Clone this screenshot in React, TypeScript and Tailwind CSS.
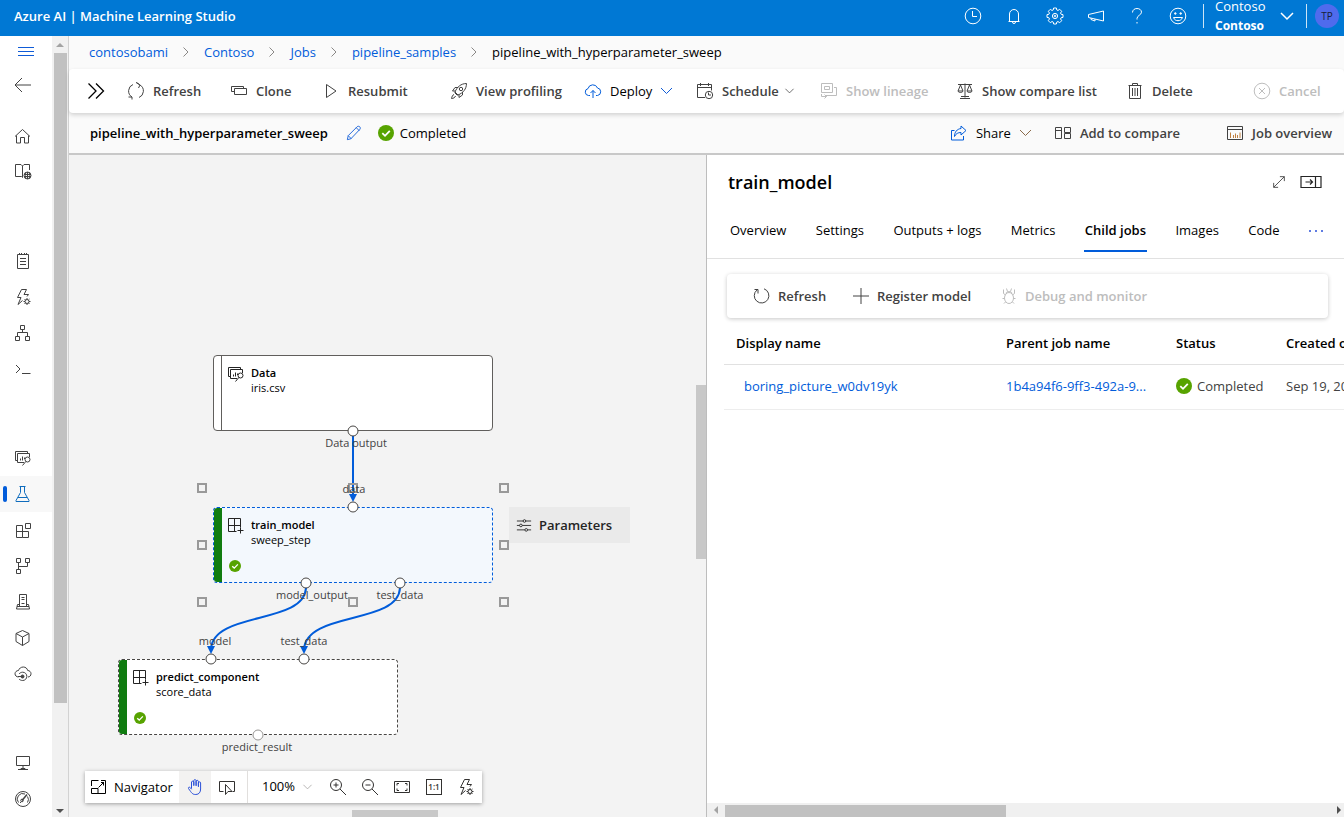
import type { ReactNode } from "react";

type IconProps = { children: ReactNode; size?: number; className?: string };

function Icon({ children, size = 18, className = "" }: IconProps) {
  return (
    <svg
      width={size}
      height={size}
      viewBox="0 0 18 18"
      fill="none"
      stroke="currentColor"
      strokeWidth={1}
      aria-hidden="true"
      className={`shrink-0 ${className}`}
    >
      {children}
    </svg>
  );
}

const gear = (
  <>
    <circle cx="13" cy="13.5" r="2" />
    <path d="M13 10v1.5M13 15.5V17M9.5 13.5H11M15 13.5h1.5M10.5 11l1.1 1.1M14.4 14.9l1.1 1.1M15.5 11l-1.1 1.1M11.6 14.9L10.5 16" />
  </>
);

const icons = {
  menu: <path d="M1 4.5h16M1 8.5h16M1 12.5h16" />,
  back: <path d="M1 9h16M8 2L1 9l7 7" />,
  home: <path d="M2.5 8.5v7.5h4v-5.5h4V16h4V8.5M1 9.5L8.5 2.5 16 9.5" />,
  book: (
    <>
      <path d="M8.5 14.5L7.5 13.5H1.5V1.5h5.5l1.5 1.5v11.5M8.5 3L10 1.5h5.5V7" />
      <circle cx="13.5" cy="12.5" r="3.5" fill="#fff" />
      <path d="M13.5 9v7M10 11.5h7M10 13.5h7M12 9.5c-1 2-1 4 0 6M15 9.5c1 2 1 4 0 6" />
    </>
  ),
  notebook: <path d="M3.5 2.500h11v14h-11zM5.5 1v2M7.5 1v2M10.5 1v2M12.5 1v2M6 6.5h6M6 9.5h6M6 12.5h6" />,
  bolt: (
    <>
      <path d="M7.5 1.5h5L10 6.5h4.5L13 8.5M7.5 1.5L3.5 9.5h3.5L4 16.5l4.5-4" />
      {gear}
    </>
  ),
  tree: <path d="M6.5 1.5h4v4h-4zM1.5 12.5h4v4h-4zM11.5 12.5h4v4h-4zM8.5 5.5v3M3.5 12.5v-4h10v4" />,
  terminal: <path d="M2 5l4 4-4 4M8 13.5h8.5" />,
  data: (
    <>
      <path d="M3.5 11.5h-2v-9h12v2M10 13.5H3.5v-9h12V8M6.5 11.5V9.5M8.5 11.5v-4M10.5 10V8.5" />
      <circle cx="13.5" cy="10.5" r="2.5" />
      <path d="M11.8 12.5L8.5 16.5" />
    </>
  ),
  flask: <path d="M5.5 1.5h6M6.5 1.5v6L2 15.5V16.5h13V15.5L10.5 7.5v-6M4 12.5h9" />,
  blocks: <path d="M2.5 4.500h6v12h-6zM2.5 10.500h12v6h-6M11.5 2.5h5v5h-5z" />,
  branch: <path d="M2.5 1.5h4v4h-4zM11.5 1.5h4v4h-4zM2.5 12.5h4v4h-4zM4.5 5.5v7M4.5 9.5h9v-4" />,
  server: <path d="M5.5 1.5h7v12h-7zM7.5 4.5h3M7.5 6.5h3M7.5 10.5h3M5 11.5H3.5l-1 4.5h13l-1-4.5H13M3 13.5h12" />,
  cube: <path d="M8.5 1.5L15 4.5v8L8.5 16.5 2 12.5v-8zM2 4.5l6.5 3.5L15 4.5M8.5 8v8.5" />,
  cloudRing: (
    <>
      <path d="M4.5 12C2.5 12 1 10.5 1 8.8S2.5 5.5 4.500 5.500C5 3.500 7 2 9.300 2s4 1.500 4.400 3.500c1.800 0 3.300 1.400 3.300 3.200S15.800 12 14 12" />
      <path d="M5 9c1-1.200 2.300-1.800 3.700-1.800A4 4 0 0 1 8.700 15.500C7.300 15.500 6 15 5 14" />
      <circle cx="8.500" cy="11.500" r="1.500" fill="currentColor" />
      <path d="M4 11.500h4" />
    </>
  ),
  monitor: <path d="M2.500 2.500h13v9h-13zM9 11.500v3M4 15.500h10M7 15.500V14.500h4v1" />,
  gauge: (
    <>
      <circle cx="9" cy="9" r="7.500" />
      <path d="M4.500 12.500A5.500 5.500 0 0 1 11 4M13.500 6.500a5.500 5.500 0 0 1 0 6M6 12.500h1" />
      <path d="M8 10.500L13 4.500" strokeWidth="1.500" />
      <circle cx="8" cy="10.500" r="1.300" />
    </>
  ),
  clock: (
    <>
      <circle cx="9" cy="9" r="7.800" />
      <path d="M8.500 4v5.500H13" />
    </>
  ),
  bell: <path d="M3.500 14.500h11M4.500 14V7a4.500 4.500 0 0 1 9 0v7M7.500 15a1.500 1.500 0 0 0 3 0" />,
  settings: (
    <>
      <circle cx="9" cy="9" r="2.600" />
      <circle cx="9" cy="9" r=".8" />
      <path d="M7.600 1h2.800l.4 2 1.100.5 1.800-1.200 2 2-1.200 1.800.5 1.100 2 .4v2.800l-2 .4-.5 1.100 1.200 1.800-2 2-1.800-1.200-1.100.5-.4 2H7.600l-.4-2-1.100-.5-1.800 1.200-2-2 1.200-1.800-.5-1.100-2-.4V7.600l2-.4.5-1.100-1.200-1.800 2-2 1.800 1.200 1.100-.5z" />
    </>
  ),
  megaphone: <path d="M1.500 7.500L16.500 4v10L1.500 10.500zM4 11v1.500l4 1.500v-2" />,
  help: (
    <>
      <path d="M4.500 5.500C4.500 3 6.500 1.500 9 1.500S13.500 3 13.500 5.200C13.500 8 9 8.500 9 11.500v1" />
      <path d="M9 15v1.500" />
    </>
  ),
  smile: (
    <>
      <circle cx="9" cy="9" r="7.800" />
      <path d="M4.500 10.500c.8 2.200 2.500 3.200 4.500 3.200s3.700-1 4.500-3.200z" />
      <circle cx="6.300" cy="6.500" r=".8" fill="currentColor" />
      <circle cx="11.700" cy="6.500" r=".8" fill="currentColor" />
    </>
  ),
  expandNav: <path strokeWidth="1.300" d="M1.500 1.500L9 9l-7.500 7.500M9 1.500L16.500 9 9 16.500" />,
  sync: <path d="M6 2.500A7 7 0 0 0 5 15M5 15H1.500M5 15v2.500M12 15.500A7 7 0 0 0 13 3M9.500 .5L13 3l-1.500 3M9 .5l3.500 2" />,
  clone: <path d="M4.500 9.500h-3v-5h12v2M4.500 6.500h12v6h-12z" />,
  play: <path d="M4.500 2.500L14 9l-9.500 6.500z" />,
  rocket: (
    <>
      <path d="M5 10C7 5 11 1.500 16.500 1.500 16.500 7 13 11 8 13zM5.500 9L2.500 9 5 5.500h3M9 12.500v3L12.500 13v-3M4.500 10.500l3 3M4 12.500c-1.500.5-2 2-2.500 4 2 0 3.500-1 4-2.500" />
      <circle cx="11" cy="7" r="1.700" />
    </>
  ),
  cloudUp: <path d="M6 13.500H4.500A3.500 3.500 0 0 1 4 6.600 5 5 0 0 1 13.500 6 3.800 3.800 0 0 1 13.500 13.500H12M9 16V8.500M6.500 11L9 8.500l2.500 2.500" />,
  calendar: (
    <>
      <path d="M9 15.500H1.500v-13h14v6M1.500 5.500h14M4.500 1v3M12.500 1v3" />
      <circle cx="13" cy="13" r="3.700" />
      <path d="M12.500 10.500v2.500H15" />
    </>
  ),
  lineage: <path d="M1.500 1.500h11v9h-11zM4.500 4.500h5v3h-5zM14 5.500h2.500v8H7M10 13.500H5M1.500 12v2.500h5M4.500 12.500l2 2-2 2" />,
  scales: <path d="M2 2.500h14M9 1.500v14M4 16.500h10M5 14.500h8M4.500 3L2 9h5L4.500 3M13.500 3L11 9h5l-2.500-6M2 9c.5 2 4.500 2 5 0M11 9c.5 2 4.500 2 5 0" />,
  trash: <path d="M2.500 3.500h13M6.500 3.500v-2h5v2M3.500 3.500v13h11v-13M6.500 6v8M9 6v8M11.500 6v8" />,
  cancel: (
    <>
      <circle cx="9" cy="9" r="7.800" />
      <path d="M6 6l6 6M12 6l-6 6" />
    </>
  ),
  pencil: <path d="M1.500 16.500l1-4.500L12.500 2c1-1 2.500-.500 3 0s1 2 0 3L5.500 15.500zM11.500 3l3.500 3.500M2.500 12l3.500 3.500" />,
  share: <path d="M4.500 6.500h-3v9.500h12v-4M11 2l5 4.500-5 4.500V8.500C8 8.500 6 9.500 4.500 12.500 4.500 8 7 5 11 4.500z" />,
  compare: <path d="M1.500 3.500h6v11h-6zM1.500 6.500h6M10.500 3.500h6v5h-6zM10.500 9.500h6v5h-6z" />,
  report: (
    <>
      <path d="M1.500 2.500h15v13h-15zM1.500 5.500h15" />
      <path stroke="#c08040" d="M4.500 14V8.500M7.500 14v-3M9.500 14v-4.500M11.500 14v-3M14 14V8.500" />
    </>
  ),
  diagonal: <path d="M3 15L15 3M10 3h5v5M3 10v5h5" />,
  refresh: <path d="M4 3A7.300 7.300 0 1 0 11 1.800M1.500 2.500H5v4" />,
  plus: <path d="M9 1v16M1 9h16" />,
  bug: (
    <>
      <ellipse cx="9" cy="11" rx="4.500" ry="5.500" />
      <path d="M6 6.500C6 4 12 4 12 6.500M6.500 1.500L7.500 4.500M11.500 1.500L10.500 4.500M5.500 8L3.500 6.500V2.500M12.500 8l2-1.500V2.500M4.500 11.500h-2M13.500 11.500h2M5.500 15L4 16.500M12.500 15l1.500 1.500" />
    </>
  ),
  component: <path d="M1.500 1.500h12v9M9.500 14.500h-8v-13M7.500 1.500v13M1.500 8.500h12M13.500 10.500v6M10.500 13.500h6" />,
  sliders: (
    <>
      <path d="M1 4.500h7M11 4.500h6M1 9.500h3M7 9.500h10M1 14.500h9M13 14.500h4" />
      <circle cx="9.500" cy="4.500" r="1.500" />
      <circle cx="5.500" cy="9.500" r="1.500" />
      <circle cx="11.500" cy="14.500" r="1.500" />
    </>
  ),
  navigator: <path d="M1.500 8V2.500h7M11 2.500h4.500v13h-14v-5H8v5M8.500 9.500L14 4M11 4.500h2.500V7.500" />,
  hand: <path d="M5.500 10.500V4a1.200 1.200 0 0 1 2.300 0V8M7.800 7V2.500a1.200 1.200 0 0 1 2.300 0V8M10.100 7.500V3.200a1.200 1.200 0 0 1 2.300 0V9M12.400 8V5a1.100 1.100 0 0 1 2.200 0v6c0 3-1.500 5.500-4.800 5.500S6 15.500 2.500 10.500c-.6-1 .8-1.800 1.600-1l1.500 1.800" />,
  select: <path d="M5.500 13.500h-4v-10h15v10h-2M7.500 6.500v10l2.500-3h4z" />,
  zoomIn: (
    <>
      <circle cx="7" cy="7" r="5.500" />
      <path d="M11 11l6 6M7 4.500v5M4.500 7h5" />
    </>
  ),
  zoomOut: (
    <>
      <circle cx="7" cy="7" r="5.500" />
      <path d="M11 11l6 6M4.500 7h5" />
    </>
  ),
  fit: <path d="M1.500 3.500h15v11h-15zM4 7.500V5.500h2M12 5.500h2v2M14 10.500v2h-2M6 12.500H4v-2" />,
};

type IconName = keyof typeof icons;

function Chevron({ className = "" }: { className?: string }) {
  return (
    <svg width="13" height="8" viewBox="0 0 13 8" fill="none" stroke="currentColor" aria-hidden="true" className={`shrink-0 ${className}`}>
      <path d="M1 1l5.500 5.500L12 1" />
    </svg>
  );
}

function Check({ size = 16, className = "" }: { size?: number; className?: string }) {
  return (
    <svg width={size} height={size} viewBox="0 0 16 16" aria-hidden="true" className={`shrink-0 ${className}`}>
      <circle cx="8" cy="8" r="8" fill="#57a300" />
      <path d="M4.300 8.200l2.700 2.600 4.800-5" fill="none" stroke="#fff" strokeWidth="1.800" />
    </svg>
  );
}

const navGroups: { name: IconName; label: string }[][] = [
  [
    { name: "home", label: "Home" },
    { name: "book", label: "Model catalog" },
  ],
  [
    { name: "notebook", label: "Notebooks" },
    { name: "bolt", label: "Automated ML" },
    { name: "tree", label: "Designer" },
    { name: "terminal", label: "Prompt flow" },
  ],
  [
    { name: "data", label: "Data" },
    { name: "flask", label: "Jobs" },
    { name: "blocks", label: "Components" },
    { name: "branch", label: "Pipelines" },
    { name: "server", label: "Environments" },
    { name: "cube", label: "Models" },
    { name: "cloudRing", label: "Endpoints" },
  ],
  [
    { name: "monitor", label: "Compute" },
    { name: "gauge", label: "Monitoring" },
  ],
];

function Sidebar() {
  return (
    <div className="flex shrink-0 border-r border-[#d2d2d2] bg-white">
      <nav aria-label="Workspace" className="flex w-[52px] flex-col overflow-hidden text-[#424242]">
        <button aria-label="Toggle menu" className="flex h-8 items-center pl-[17px] text-[#0f5bd7]">
          <Icon>{icons.menu}</Icon>
        </button>
        <button aria-label="Back" className="flex h-9 items-center pl-3.5">
          <Icon>{icons.back}</Icon>
        </button>
        <div className="mt-4 flex flex-col gap-[53px]">
          {navGroups.map((group, i) => (
            <ul key={i}>
              {group.map(({ name, label }) => {
                const active = name === "flask";
                return (
                  <li key={name}>
                    <a
                      href={`#${name}`}
                      aria-label={label}
                      className={`flex h-9 items-center ${active ? "bg-[#f8f8f8] text-[#0f6cbd]" : ""}`}
                    >
                      <span className={`ml-[3px] h-4 w-1 rounded-sm ${active ? "bg-[#015cda]" : ""}`} />
                      <Icon className="ml-[7px]">{icons[name]}</Icon>
                    </a>
                  </li>
                );
              })}
            </ul>
          ))}
        </div>
      </nav>
      <div className="flex w-4 flex-col items-center bg-[#f1f1f1]">
        <svg width="8" height="17" viewBox="0 0 8 17" aria-hidden="true" className="shrink-0"><path d="M0 11l4-4 4 4z" fill="#a3a3a3" /></svg>
        <div className="ml-px h-[650px] w-[13px] shrink-0 bg-[#c1c1c1]" />
        <svg width="8" height="12" viewBox="0 0 8 12" aria-hidden="true" className="mt-auto shrink-0"><path d="M0 4l4 4 4-4z" fill="#505050" /></svg>
      </div>
    </div>
  );
}

const headerIcons: { name: IconName; label: string }[] = [
  { name: "clock", label: "Recent" },
  { name: "bell", label: "Notifications" },
  { name: "settings", label: "Settings" },
  { name: "megaphone", label: "Announcements" },
  { name: "help", label: "Help" },
  { name: "smile", label: "Feedback" },
];

function Header() {
  return (
    <header className="flex h-9 shrink-0 items-center overflow-hidden bg-[#0078d4] text-white">
      <h1 className="flex-1 pb-1 pl-3.5 text-[13px] leading-5 font-semibold">Azure AI | Machine Learning Studio</h1>
      <div className="flex pb-1">
        {headerIcons.map(({ name, label }) => (
          <button key={name} aria-label={label} className="flex w-[41px] justify-center">
            <Icon>{icons[name]}</Icon>
          </button>
        ))}
      </div>
      <button className="mb-1 ml-[5px] flex h-6 w-[104px] items-center justify-between border-x border-white/80 pr-3 pl-[11px] text-left">
        <span className="text-[13px] leading-5">
          Contoso
          <strong className="block text-xs leading-5 font-bold">Contoso</strong>
        </span>
        <svg width="14" height="9" viewBox="0 0 14 9" fill="none" stroke="currentColor" strokeWidth="1.500" aria-hidden="true"><path d="M1 1l6 6 6-6" /></svg>
      </button>
      <span className="mr-[5px] mb-1 ml-2 flex size-6 items-center justify-center rounded-full bg-[#4f6bed] text-[10px] text-[#172036]">TP</span>
    </header>
  );
}

function Breadcrumb() {
  const items = ["contosobami", "Contoso", "Jobs", "pipeline_samples"];
  return (
    <nav aria-label="Breadcrumb" className="flex h-[33px] shrink-0 items-center pb-0.5 pl-5 text-[13px] leading-5">
      {items.map((t) => (
        <span key={t} className="flex items-center">
          <a href={`#${t}`} className="text-[#015cda]">{t}</a>
          <svg width="6" height="10" viewBox="0 0 6 10" fill="none" stroke="#8a8886" aria-hidden="true" className="mx-[15px]"><path d="M.5.5L5 5 .5 9.500" /></svg>
        </span>
      ))}
      <span className="text-black">pipeline_with_hyperparameter_sweep</span>
    </nav>
  );
}

type Action = { icon: IconName; label: string; width: string; tone?: string; chevron?: string; iconTone?: string };

const actions: Action[] = [
  { icon: "sync", label: "Refresh", width: "w-[103px]" },
  { icon: "clone", label: "Clone", width: "w-[92px]" },
  { icon: "play", label: "Resubmit", width: "w-32" },
  { icon: "rocket", label: "View profiling", width: "w-[134px]" },
  { icon: "cloudUp", label: "Deploy", width: "w-28", tone: "text-black", iconTone: "text-[#015cda]", chevron: "ml-2 text-[#0f5bd7]" },
  { icon: "calendar", label: "Schedule", width: "w-[124px]", chevron: "ml-1 scale-75" },
  { icon: "lineage", label: "Show lineage", width: "w-[136px]", tone: "text-[#bdbdbd]" },
  { icon: "scales", label: "Show compare list", width: "w-[170px]" },
  { icon: "trash", label: "Delete", width: "w-[127px]" },
  { icon: "cancel", label: "Cancel", width: "w-[90px]", tone: "text-[#bdbdbd]" },
];

function Toolbar() {
  return (
    <div role="toolbar" className="z-10 flex h-11 shrink-0 items-center overflow-hidden rounded bg-white pl-[18px] text-[13px] leading-5 font-semibold shadow-[0_2px_4px_rgba(0,0,0,0.16)]">
      <button aria-label="Expand" className="w-10 text-black"><Icon>{icons.expandNav}</Icon></button>
      {actions.map((a) => (
        <button
          key={a.label}
          disabled={a.tone === "text-[#bdbdbd]"}
          className={`flex shrink-0 items-center ${a.width} ${a.tone ?? "text-[#424242]"} ${a.label === "Deploy" ? "font-normal" : ""}`}
        >
          <Icon className={`mr-2 ${a.iconTone ?? ""}`}>{icons[a.icon]}</Icon>
          {a.label}
          {a.chevron && <Chevron className={a.chevron} />}
        </button>
      ))}
    </div>
  );
}

function TitleRow() {
  return (
    <div className="flex h-10 shrink-0 items-center pr-3 pl-[21px] text-[13px] leading-5 font-semibold text-[#424242]">
      <h2 className="text-black">pipeline_with_hyperparameter_sweep</h2>
      <button aria-label="Rename" className="ml-[18px] text-[#0f5bd7]"><Icon size={16}>{icons.pencil}</Icon></button>
      <span className="ml-4 flex items-center gap-1.5 font-normal text-black"><Check />Completed</span>
      <button className="ml-auto flex items-center font-normal text-black">
        <Icon className="mr-2 text-[#015cda]">{icons.share}</Icon>Share<Chevron className="ml-2 text-[#8a6a4a]" />
      </button>
      <button className="ml-[22px] flex items-center gap-2"><Icon>{icons.compare}</Icon>Add to compare</button>
      <button className="ml-[46px] flex items-center gap-2"><Icon>{icons.report}</Icon>Job overview</button>
    </div>
  );
}

type NodeProps = { place: string; frame: string; icon: IconName; title: string; sub: string; done?: boolean };

function Node({ place, frame, icon, title, sub, done }: NodeProps) {
  return (
    <article className={`absolute flex h-[76px] w-[280px] overflow-hidden rounded ${place} ${frame}`}>
      <div className={done ? "w-2 bg-[#107c10]" : "w-2 border-r border-[#605e5c]"} />
      <div className="flex flex-1 flex-col justify-between pt-[9px] pb-2.5 pl-[5px]">
        <div className="flex gap-1.5">
          <Icon className="text-[#242424]">{icons[icon]}</Icon>
          <div className="text-[11px] leading-[15px] text-black">
            <h3 className="font-semibold">{title}</h3>
            <p>{sub}</p>
          </div>
        </div>
        {done && <Check size={12} className="ml-0.5" />}
      </div>
    </article>
  );
}

const portLabels = [
  { text: "Data output", at: "left-[287px] top-[280px]" },
  { text: "data", at: "left-[285px] top-[326px]" },
  { text: "model_output", at: "left-[243px] top-[432px]" },
  { text: "test_data", at: "left-[331px] top-[432px]" },
  { text: "model", at: "left-[146px] top-[478px]" },
  { text: "test_data", at: "left-[235px] top-[478px]" },
  { text: "predict_result", at: "left-[188px] top-[584px]" },
];

const handles = [
  [133, 333], [284, 333], [435, 333],
  [133, 390], [435, 390],
  [133, 447], [284, 447], [435, 447],
];

const ports = [[284, 276], [284, 352], [237, 428], [331, 428], [142, 504], [235, 504]];

function Canvas() {
  return (
    <section aria-label="Pipeline graph" className="relative min-w-0 flex-1 overflow-hidden bg-[#f3f3f3]">
      <Node place="left-36 top-[200px]" frame="border border-[#605e5c] bg-white" icon="data" title="Data" sub="iris.csv" />
      <Node place="left-36 top-[352px]" frame="border border-dashed border-[#015cda] bg-[#f3f8fd]" icon="component" title="train_model" sub="sweep_step" done />
      <Node place="left-[49px] top-[504px]" frame="border border-dashed border-[#484644] bg-white" icon="component" title="predict_component" sub="score_data" done />

      <svg width="636" height="640" viewBox="0 0 636 640" fill="none" aria-hidden="true" className="absolute top-0 left-0">
        <g stroke="#015cda" strokeWidth="2">
          <path d="M284 281v60" />
          <path d="M237 433C235 470 144 456 142 494" />
          <path d="M331 433C329 470 238 456 235 494" />
        </g>
        <path fill="#015cda" d="M280 339h8l-4 8zM138 491h8l-4 8zM231 491h8l-4 8z" />
        {handles.map(([x, y]) => (
          <rect key={`${x}-${y}`} x={x - 4} y={y - 4} width="8" height="8" stroke="#999" strokeWidth="2" />
        ))}
        {ports.map(([x, y]) => (
          <circle key={`${x}-${y}`} cx={x} cy={y} r="5" fill="#fff" stroke="#484644" />
        ))}
        <circle cx="189" cy="580" r="5" fill="#fff" stroke="#979593" />
      </svg>

      {portLabels.map((l) => (
        <span key={l.at} className={`absolute -translate-x-1/2 text-[11px] leading-4 text-[#424242] ${l.at}`}>{l.text}</span>
      ))}

      <button className="absolute top-[352px] left-[440px] flex h-9 w-[121px] items-center gap-[7px] bg-[#eaeaea] pl-[7px] text-[13px] leading-5 font-semibold text-[#242424]">
        <Icon size={16}>{icons.sliders}</Icon>Parameters
      </button>

      <div className="absolute right-0 top-[230px] h-[174px] w-2.5 bg-[#c8c8c8]" />
      <div className="absolute bottom-0 left-[283px] h-[7px] w-[86px] bg-[#c8c8c8]" />

      <div role="toolbar" aria-label="Canvas tools" className="absolute bottom-3.5 left-4 flex h-8 items-stretch bg-white text-[#323130] shadow-[0_1px_4px_rgba(0,0,0,0.35)]">
        <button className="flex w-[94px] items-center gap-1.5 pl-[5px] text-[13px] leading-5 text-black"><Icon>{icons.navigator}</Icon>Navigator</button>
        <button aria-label="Pan" className="flex w-8 items-center justify-center bg-[#f3f2f1] text-[#2b50d8]"><Icon>{icons.hand}</Icon></button>
        <button aria-label="Select" className="flex w-[37px] items-center border-r border-[#e1dfdd] pl-[7px]"><Icon>{icons.select}</Icon></button>
        <button className="flex w-[74px] items-center gap-1.5 pl-3.5 text-[13px] text-black">100%<Chevron className="scale-75 text-[#a19f9d]" /></button>
        <button aria-label="Zoom in" className="flex w-8 items-center justify-center"><Icon>{icons.zoomIn}</Icon></button>
        <button aria-label="Zoom out" className="flex w-8 items-center justify-center"><Icon>{icons.zoomOut}</Icon></button>
        <button aria-label="Fit to screen" className="flex w-8 items-center justify-center"><Icon>{icons.fit}</Icon></button>
        <button aria-label="Actual size" className="flex w-8 items-center justify-center"><span className="flex size-4 items-center justify-center border border-[#323130] text-[8px] font-semibold">1:1</span></button>
        <button aria-label="Auto layout" className="flex w-8 items-center justify-center"><Icon>{icons.bolt}</Icon></button>
      </div>
    </section>
  );
}

const tabs = ["Overview", "Settings", "Outputs + logs", "Metrics", "Child jobs", "Images", "Code"];

function DetailPanel() {
  return (
    <aside className="flex w-[638px] shrink-0 flex-col overflow-hidden border-l border-[#bdbdbd] bg-white text-[13px] leading-5 text-black">
      <div className="flex h-[55px] shrink-0 items-center pr-[22px] pb-0.5 pl-[21px]">
        <h2 className="flex-1 text-lg leading-7 font-semibold">train_model</h2>
        <button aria-label="Expand panel" className="mr-[13px] text-[#424242]"><Icon size={16}>{icons.diagonal}</Icon></button>
        <button aria-label="Close panel" className="text-[#242424]">
          <svg width="22" height="14" viewBox="0 0 22 14" fill="none" stroke="currentColor" strokeWidth="1.200" aria-hidden="true">
            <path d="M1 1.500h20v11H1zM15.500 1.500v11M5.500 7h7M10 4.500L12.500 7 10 9.500" />
          </svg>
        </button>
      </div>
      <div role="tablist" className="flex h-[49px] shrink-0 items-start justify-between border-b border-[#e1e1e1] pr-5 pl-[22px]">
        {tabs.map((t) => (
          <button
            key={t}
            role="tab"
            aria-selected={t === "Child jobs"}
            className={`h-[42px] border-b-2 px-px py-[11px] leading-[18px] ${t === "Child jobs" ? "border-[#015cda] font-semibold" : "border-transparent"}`}
          >
            {t}
          </button>
        ))}
        <button aria-label="More tabs" className="flex h-[42px] items-center text-[#2b50d8]">
          <svg width="16" height="4" viewBox="0 0 16 4" fill="currentColor" aria-hidden="true"><circle cx="2" cy="2" r="1" /><circle cx="8" cy="2" r="1" /><circle cx="14" cy="2" r="1" /></svg>
        </button>
      </div>
      <div role="toolbar" className="mt-[15px] mr-4 ml-5 flex h-11 shrink-0 items-center rounded pl-[26px] font-semibold text-[#424242] shadow-[0_1px_4px_rgba(0,0,0,0.22)]">
        <button className="flex w-[99px] items-center gap-[7px]"><Icon>{icons.refresh}</Icon>Refresh</button>
        <button className="flex w-[148px] items-center gap-[7px]"><Icon>{icons.plus}</Icon>Register model</button>
        <button disabled className="flex items-center gap-[7px] text-[#bdbdbd]"><Icon>{icons.bug}</Icon>Debug and monitor</button>
      </div>
      <div className="ml-[17px] flex-1 overflow-hidden">
        <table className="w-[740px] table-fixed text-left">
          <thead>
            <tr className="h-[46px] border-b border-[#e1e1e1]">
              <th className="w-[270px] pt-1 pl-3 font-semibold">Display name</th>
              <th className="w-[170px] pt-1 pl-3 font-semibold">Parent job name</th>
              <th className="w-[110px] pt-1 pl-3 font-semibold">Status</th>
              <th className="pt-1 pl-3 font-semibold">Created on</th>
            </tr>
          </thead>
          <tbody>
            <tr className="h-[45px] border-b border-[#ededed] text-[#424242]">
              <td className="pb-0.5 pl-5"><a href="#job" className="text-[#015cda]">boring_picture_w0dv19yk</a></td>
              <td className="pb-0.5 pl-3"><a href="#parent" className="text-[#015cda]">1b4a94f6-9ff3-492a-9...</a></td>
              <td className="pb-0.5 pl-3"><span className="flex items-center gap-[5px] whitespace-nowrap"><Check />Completed</span></td>
              <td className="pb-0.5 pl-3">Sep 19, 2023</td>
            </tr>
          </tbody>
        </table>
      </div>
      <div className="flex h-3.5 shrink-0 items-center bg-[#f0f0f0] px-[7px]">
        <svg width="4" height="8" viewBox="0 0 4 8" aria-hidden="true"><path d="M4 0v8L0 4z" fill="#a3a3a3" /></svg>
        <div className="mt-0.5 ml-[7px] h-3 w-[281px] bg-[#c1c1c1]" />
        <svg width="4" height="8" viewBox="0 0 4 8" aria-hidden="true" className="-mr-1 ml-auto"><path d="M0 0v8l4-4z" fill="#505050" /></svg>
      </div>
    </aside>
  );
}

export default function App() {
  return (
    <div className="flex h-screen flex-col overflow-hidden font-['Open_Sans','Noto_Sans',sans-serif]">
      <Header />
      <div className="flex min-h-0 flex-1">
        <Sidebar />
        <main className="flex min-w-0 flex-1 flex-col bg-[#fafafa]">
          <Breadcrumb />
          <Toolbar />
          <TitleRow />
          <div className="flex min-h-0 flex-1 border-t-2 border-[#c8c8c8]">
            <Canvas />
            <DetailPanel />
          </div>
        </main>
      </div>
    </div>
  );
}
